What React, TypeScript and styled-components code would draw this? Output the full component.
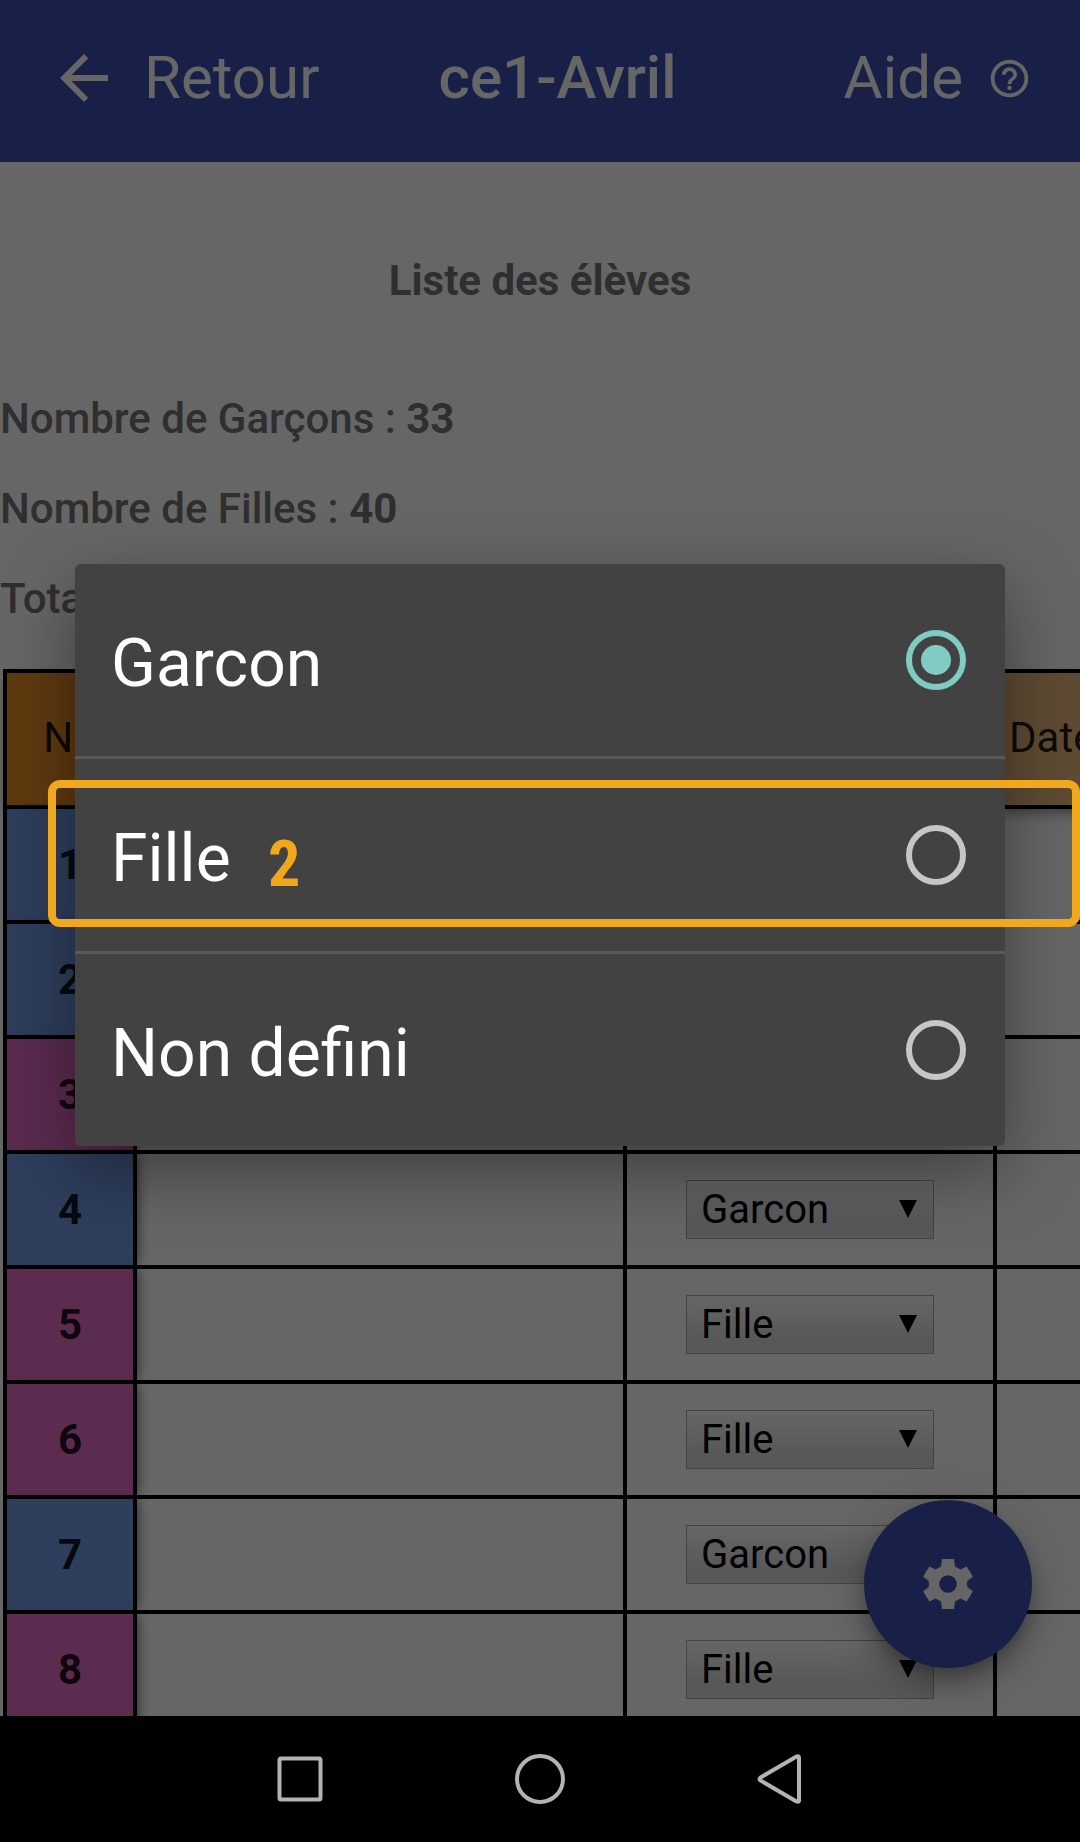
import React, { useState } from 'react';
import styled, { createGlobalStyle } from 'styled-components';

const GlobalStyle = createGlobalStyle`
  *, *::before, *::after { box-sizing: border-box; }
  html, body { margin: 0; padding: 0; }
  body { font-family: Roboto, "Liberation Sans", sans-serif; background: #000; }
  button, select, input { font-family: inherit; }
`;

const Screen = styled.div`
  display: flex;
  flex-direction: column;
  height: 100vh;
  overflow: hidden;
`;

const AppArea = styled.div`
  position: relative;
  flex: 1;
  min-height: 0;
  display: flex;
  flex-direction: column;
  overflow: hidden;
  background: #fff;
`;

const Toolbar = styled.header`
  flex: none;
  display: flex;
  align-items: center;
  justify-content: space-between;
  height: 162px;
  padding: 0 48px 6px;
  background: #3f51b5;
  color: #fff;
`;

const ToolbarButton = styled.button`
  display: flex;
  align-items: center;
  gap: 24px;
  padding: 0;
  border: 0;
  background: none;
  color: inherit;
  font-size: 60px;
  line-height: 72px;
`;

const ToolbarTitle = styled.h1`
  margin: 0 48px 0 0;
  font-size: 60px;
  line-height: 72px;
  font-weight: 500;
`;

const Content = styled.main`
  flex: 1;
  min-height: 0;
  overflow: hidden;
  color: #757575;
  font-size: 42px;
  line-height: 48px;
`;

const ListTitle = styled.h2`
  margin: 95px 0 90px;
  text-align: center;
  font-size: 42px;
  line-height: 48px;
  font-weight: 700;
`;

const Count = styled.p`
  margin: 0 0 42px;
  font-weight: 500;
`;

const TableArea = styled.div`
  margin-top: 46px;
  padding-left: 3px;
`;

const Table = styled.table`
  border-collapse: collapse;
  table-layout: fixed;
  width: 1400px;
  color: rgba(0, 0, 0, 0.87);
`;

const Col = styled.col<{ $width: number }>`
  width: ${(p) => p.$width}px;
`;

const HeadCell = styled.th<{ $fixed?: boolean }>`
  height: 136px;
  padding: ${(p) => (p.$fixed ? '0 20px 2px 12px' : '0 12px 2px')};
  border: 4px solid #000;
  background: ${(p) => (p.$fixed ? '#ee9128' : '#eebc80')};
  box-shadow: 0 8px 14px -4px rgba(0, 0, 0, 0.5);
  font-weight: 400;
  text-align: ${(p) => (p.$fixed ? 'center' : 'left')};
`;

const NumberCell = styled.th<{ $girl: boolean }>`
  height: 115px;
  padding: 0;
  border: 4px solid #000;
  background: ${(p) => (p.$girl ? '#e46cc8' : '#739be6')};
  box-shadow: 8px 0 10px -4px rgba(0, 0, 0, 0.5);
  font-weight: 700;
`;

const Cell = styled.td`
  height: 115px;
  padding: 0;
  border: 4px solid #000;
  text-align: center;
`;

const SelectBox = styled.span`
  position: relative;
  display: block;
  width: 248px;
  height: 59px;
  margin: 0 auto;

  &::after {
    content: '';
    position: absolute;
    top: 20px;
    right: 17px;
    border: 9px solid transparent;
    border-top: 18px solid #000;
    border-bottom: 0;
    pointer-events: none;
  }
`;

const Select = styled.select`
  display: block;
  appearance: none;
  width: 100%;
  height: 100%;
  padding: 0 40px 0 14px;
  border: 1px solid #a9a9a9;
  border-radius: 0;
  background: linear-gradient(#fff, #dcdcdc 75%);
  color: #000;
  font-size: 40px;
`;

const Fab = styled.button`
  position: absolute;
  right: 48px;
  bottom: 48px;
  display: grid;
  place-items: center;
  width: 168px;
  height: 168px;
  padding: 0;
  border: 0;
  border-radius: 50%;
  background: #3f51b5;
  color: #fff;
  box-shadow: 0 9px 15px -3px rgba(0, 0, 0, 0.2), 0 18px 30px rgba(0, 0, 0, 0.25),
    0 3px 54px rgba(0, 0, 0, 0.12);
`;

const Backdrop = styled.div`
  position: absolute;
  inset: 0;
  display: grid;
  align-items: center;
  padding: 0 75px 6px;
  background: rgba(0, 0, 0, 0.6);
`;

const Dialog = styled.div`
  border-radius: 6px;
  background: #424242;
  color: #fff;
  box-shadow: 0 24px 72px rgba(0, 0, 0, 0.4);
`;

const Option = styled.label`
  position: relative;
  display: flex;
  align-items: center;
  justify-content: space-between;
  height: 192px;
  padding: 0 39px 0 36px;
  font-size: 66px;
  line-height: 78px;

  & + & {
    height: 195px;
    border-top: 3px solid #5a5a5a;
  }
`;

const OptionText = styled.span`
  padding-top: 8px;
`;

const Radio = styled.input`
  appearance: none;
  display: grid;
  place-items: center;
  width: 60px;
  height: 60px;
  margin: 0;
  border: 6px solid #c6c6c6;
  border-radius: 50%;

  &:checked {
    border-color: #80cbc4;
  }

  &:checked::before {
    content: '';
    width: 30px;
    height: 30px;
    border-radius: 50%;
    background: #80cbc4;
  }
`;

const Highlight = styled.span`
  position: absolute;
  top: 21px;
  right: -75px;
  bottom: 24px;
  left: -27px;
  display: flex;
  align-items: center;
  padding: 22px 0 0 212px;
  border: 8px solid #f2a81d;
  border-radius: 12px;
  color: #f2a81d;
  font-family: "Roboto Condensed", "Liberation Sans Narrow", Roboto, sans-serif;
  font-size: 64px;
  font-weight: 700;
  pointer-events: none;
`;

const NavBar = styled.nav`
  flex: none;
  display: flex;
  align-items: center;
  justify-content: center;
  height: 126px;
  background: #000;
`;

const NavButton = styled.button`
  display: grid;
  place-items: center;
  width: 240px;
  height: 126px;
  padding: 0;
  border: 0;
  background: none;
  color: #b3b3b3;
`;

const BackArrow = () => (
  <svg width="72" height="72" viewBox="0 0 24 24" fill="currentColor" aria-hidden="true">
    <path d="M20 11H7.83l5.59-5.59L12 4l-8 8 8 8 1.41-1.41L7.83 13H20v-2z" />
  </svg>
);

const HelpIcon = () => (
  <svg width="45" height="45" viewBox="0 0 24 24" fill="currentColor" aria-hidden="true">
    <path d="M11 18h2v-2h-2v2zm1-16C6.48 2 2 6.48 2 12s4.48 10 10 10 10-4.48 10-10S17.52 2 12 2zm0 18c-4.41 0-8-3.59-8-8s3.59-8 8-8 8 3.59 8 8-3.59 8-8 8zm0-14c-2.21 0-4 1.79-4 4h2c0-1.1.9-2 2-2s2 .9 2 2c0 2-3 1.75-3 5h2c0-2.25 3-2.5 3-5 0-2.21-1.79-4-4-4z" />
  </svg>
);

const GearIcon = () => (
  <svg width="50" height="50" viewBox="0 0 50 50" aria-hidden="true">
    <path
      fill="currentColor"
      fillRule="evenodd"
      d="M19 0H31L32 7.500Q35 8.800 37.200 10.500L43.800 7.500L49.800 17.800L44 22.200Q44.400 25 44 27.800L49.800 32.200L43.800 42.500L37.200 39.500Q35 41.200 32 42.500L31 50H19L18 42.500Q15 41.200 12.800 39.500L6.200 42.500L.2 32.200L6 27.800Q5.600 25 6 22.200L.2 17.800L6.200 7.500L12.800 10.500Q15 8.800 18 7.500ZM25 16.200a8.800 8.800 0 1 0 0 17.600a8.800 8.800 0 1 0 0-17.600z"
    />
  </svg>
);

const students = [
  { id: 1, sex: 'Garcon' },
  { id: 2, sex: 'Garcon' },
  { id: 3, sex: 'Fille' },
  { id: 4, sex: 'Garcon' },
  { id: 5, sex: 'Fille' },
  { id: 6, sex: 'Fille' },
  { id: 7, sex: 'Garcon' },
  { id: 8, sex: 'Fille' },
];

const choices = ['Garcon', 'Fille', 'Non defini'];

export default function App() {
  const [choice, setChoice] = useState('Garcon');

  return (
    <Screen>
      <GlobalStyle />
      <AppArea>
        <Toolbar>
          <ToolbarButton type="button">
            <BackArrow />
            Retour
          </ToolbarButton>
          <ToolbarTitle>ce1-Avril</ToolbarTitle>
          <ToolbarButton type="button">
            Aide
            <HelpIcon />
          </ToolbarButton>
        </Toolbar>
        <Content>
          <ListTitle>Liste des élèves</ListTitle>
          <Count>
            Nombre de Garçons : <b>33</b>
          </Count>
          <Count>
            Nombre de Filles : <b>40</b>
          </Count>
          <Count>
            Total : <b>73</b>
          </Count>
          <TableArea>
            <Table>
              <colgroup>
                <Col $width={130} />
                <Col $width={490} />
                <Col $width={370} />
                <Col $width={410} />
              </colgroup>
              <thead>
                <tr>
                  <HeadCell $fixed scope="col">N°</HeadCell>
                  <HeadCell scope="col">Nom</HeadCell>
                  <HeadCell scope="col">Sexe</HeadCell>
                  <HeadCell scope="col">Date</HeadCell>
                </tr>
              </thead>
              <tbody>
                {students.map((s) => (
                  <tr key={s.id}>
                    <NumberCell scope="row" $girl={s.sex === 'Fille'}>
                      {s.id}
                    </NumberCell>
                    <Cell />
                    <Cell>
                      <SelectBox>
                        <Select aria-label={`Sexe élève ${s.id}`} defaultValue={s.sex}>
                          {choices.map((c) => (
                            <option key={c}>{c}</option>
                          ))}
                        </Select>
                      </SelectBox>
                    </Cell>
                    <Cell />
                  </tr>
                ))}
              </tbody>
            </Table>
          </TableArea>
        </Content>
        <Fab type="button" aria-label="Réglages">
          <GearIcon />
        </Fab>
        <Backdrop>
          <Dialog role="dialog" aria-label="Sexe">
            {choices.map((c) => (
              <Option key={c}>
                <OptionText>{c}</OptionText>
                <Radio
                  type="radio"
                  name="sexe"
                  value={c}
                  checked={choice === c}
                  onChange={() => setChoice(c)}
                />
                {c === 'Fille' && <Highlight>2</Highlight>}
              </Option>
            ))}
          </Dialog>
        </Backdrop>
      </AppArea>
      <NavBar>
        <NavButton type="button" aria-label="Applications récentes">
          <svg width="50" height="50" viewBox="0 0 50 50" fill="none" stroke="currentColor" strokeWidth="4">
            <rect x="4.5" y="4.5" width="41" height="41" rx="1.5" />
          </svg>
        </NavButton>
        <NavButton type="button" aria-label="Accueil">
          <svg width="50" height="50" viewBox="0 0 50 50" fill="none" stroke="currentColor" strokeWidth="4">
            <circle cx="25" cy="25" r="23" />
          </svg>
        </NavButton>
        <NavButton type="button" aria-label="Précédent">
          <svg width="50" height="50" viewBox="0 0 50 50" fill="none" stroke="currentColor" strokeWidth="4" strokeLinejoin="round">
            <path d="M5.5 23.5 41.5 2.500q2.500-1 2.500 1v43q0 2-2.500 1L5.500 26.500q-2-1.500 0-3z" />
          </svg>
        </NavButton>
      </NavBar>
    </Screen>
  );
}
